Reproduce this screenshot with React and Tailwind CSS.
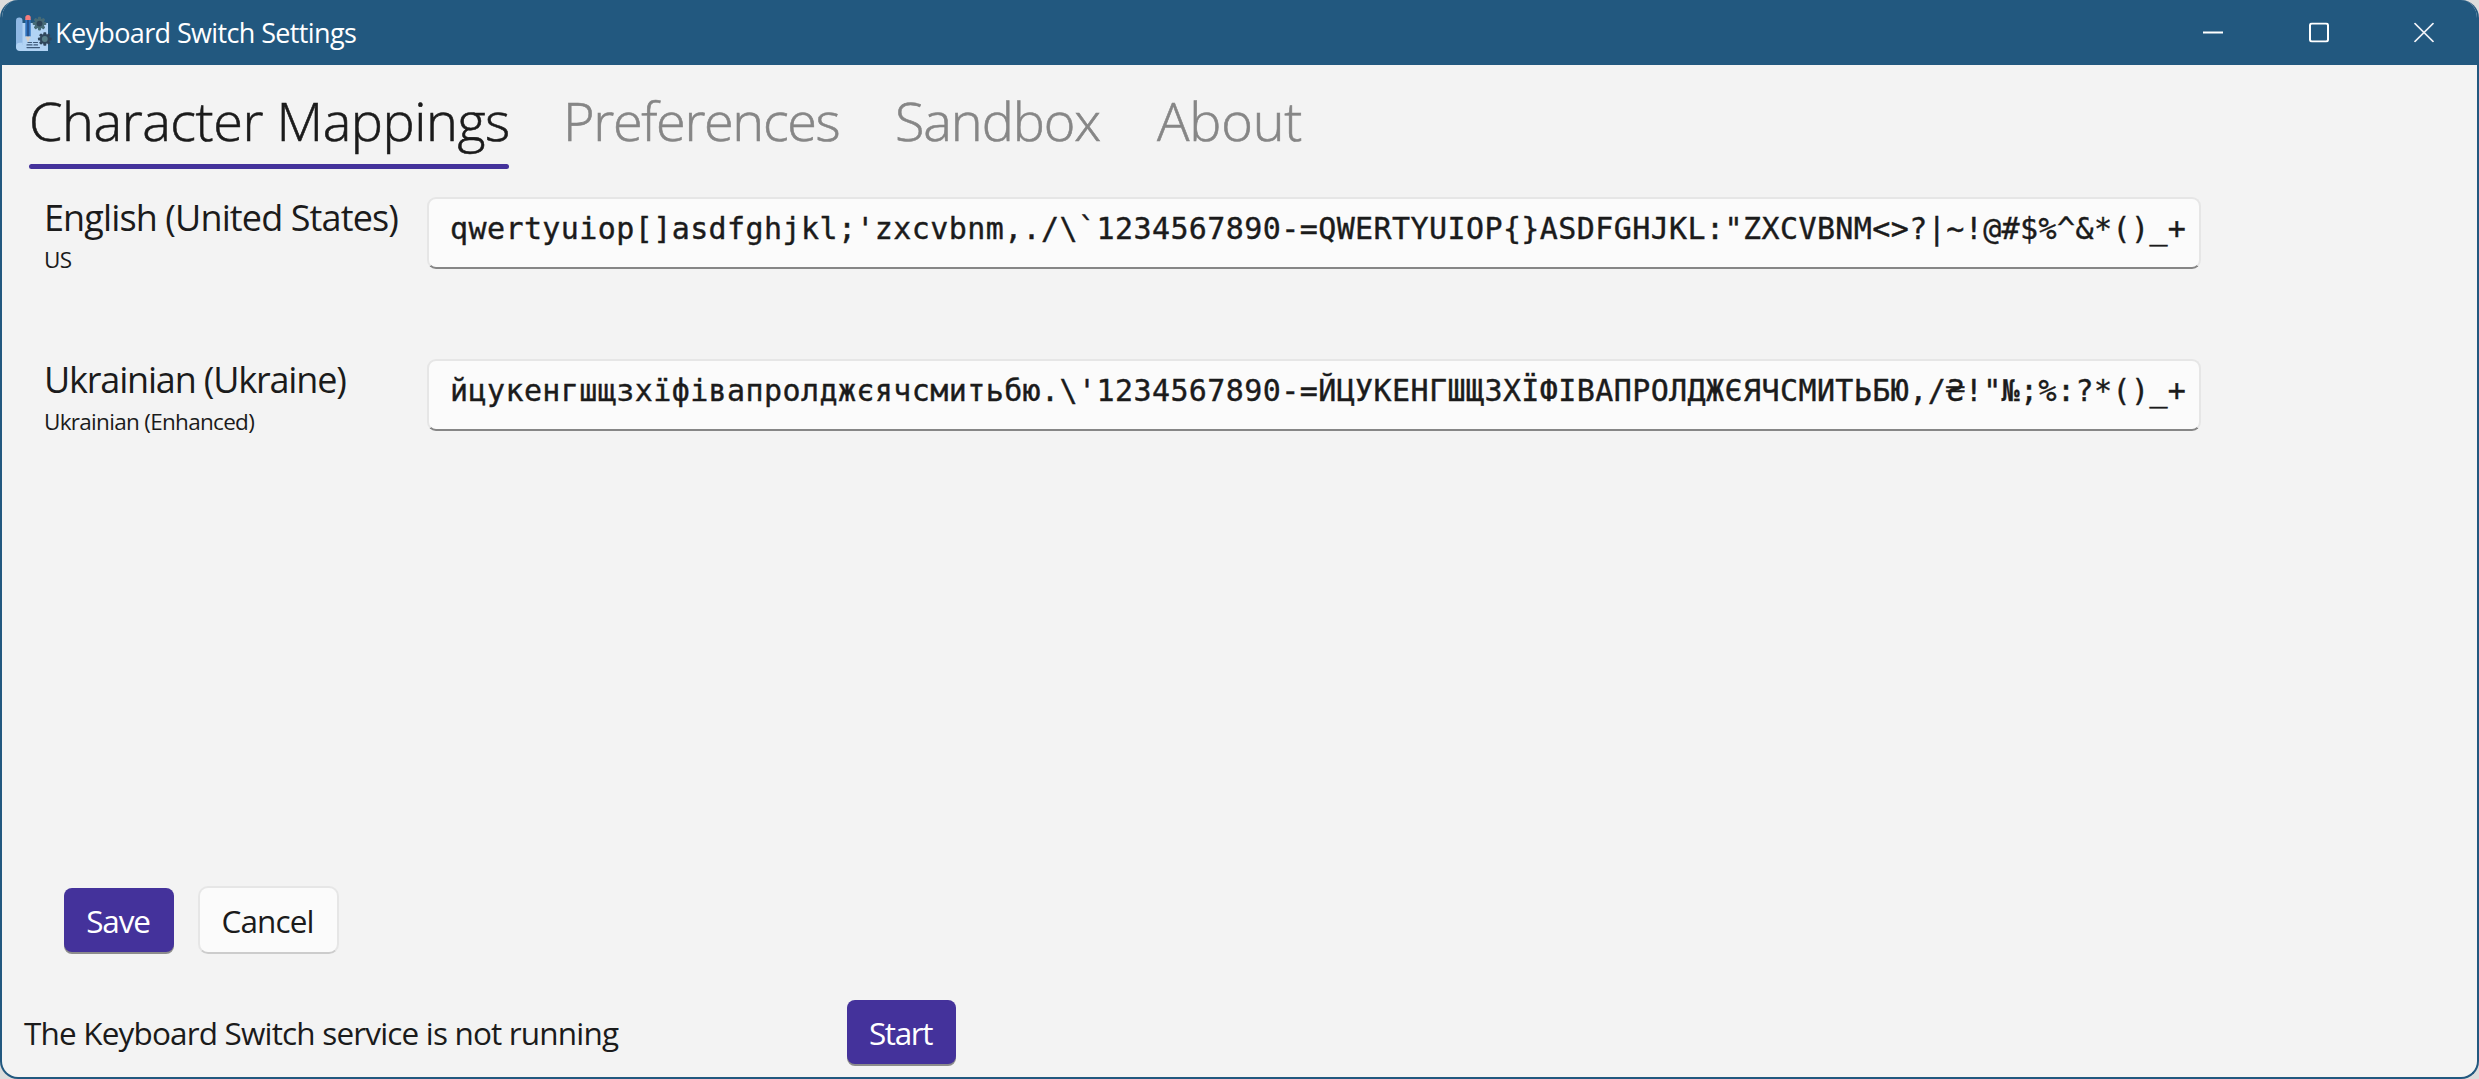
const tabs = [
  { label: "Character Mappings", active: true, box: "w-[480px]", text: "tracking-[-0.45px]" },
  { label: "Preferences", box: "w-[278px]", text: "tracking-[-1.35px]" },
  { label: "Sandbox", box: "w-[207px]", text: "tracking-[-1.1px]" },
  { label: "About", box: "w-[150px] pl-px", text: "tracking-[-0.2px]" },
];

const layouts = [
  {
    language: "English (United States)",
    languageTracking: "tracking-[-0.88px]",
    layout: "US",
    characters:
      "qwertyuiop[]asdfghjkl;'zxcvbnm,./\\`1234567890-=QWERTYUIOP{}ASDFGHJKL:\"ZXCVBNM<>?|~!@#$%^&*()_+",
  },
  {
    language: "Ukrainian (Ukraine)",
    languageTracking: "tracking-[-1.18px]",
    layout: "Ukrainian (Enhanced)",
    characters:
      "йцукенгшщзхїфівапролджєячсмитьбю.\\'1234567890-=ЙЦУКЕНГШЩЗХЇФІВАПРОЛДЖЄЯЧСМИТЬБЮ,/₴!\"№;%:?*()_+",
  },
];

function Gear({ cx, cy, fill, hub }) {
  return (
    <g transform={`translate(${cx} ${cy})`}>
      {[0, 45, 90, 135].map((a) => (
        <rect key={a} x="-1.5" y="-6.8" width="3" height="13.6" rx="0.8" fill={fill} transform={`rotate(${a})`} />
      ))}
      <circle r="5" fill={fill} />
      <circle r="2.9" fill={hub} />
    </g>
  );
}

function AppIcon() {
  return (
    <svg className="h-9 w-9 shrink-0 overflow-visible" viewBox="0 0 36 36">
      <path d="M5 8H32V36H5Z" fill="#b1d3f4" />
      <rect x="0" y="2.500" width="6.500" height="32" rx="3.200" fill="#8fb8e4" />
      <path d="M0 31.500a3.800 3.800 0 0 1 3.800-3.800H6.500V30H32V33.500A2.500 2.500 0 0 1 29.500 36H4A4 4 0 0 1 0 32Z" fill="#b1d3f4" />
      <rect x="9.300" y="4" width="5.400" height="17.500" fill="#2f72bd" />
      <rect x="11" y="5" width="2" height="16.500" fill="#25548f" />
      <path d="M9.300 5V2.600a2.700 2.700 0 0 1 5.400 0V5Z" fill="#f47c7c" />
      <path d="M9.300 21.500h5.400L12 27.500Z" fill="#d9cfc6" />
      <Gear cx={23.5} cy={8.600} fill="#476b76" hub="#2d4458" />
      <Gear cx={28.800} cy={24} fill="#30475c" hub="#587f88" />
      <path d="M12 27.500h3.500M17.500 27.500h4M11 29.900h5M18 29.900h3.500M11 32.600h12.500" stroke="#3d5878" strokeWidth="1.200" strokeLinecap="round" />
    </svg>
  );
}

function TitleBar() {
  return (
    <header className="flex h-[65px] shrink-0 items-center bg-[#22587f] pr-[43px] pl-3.5">
      <AppIcon />
      <h1 className="ml-[3px] flex-1 pt-px text-[27px] leading-[36px] tracking-[-0.63px] text-white">
        Keyboard Switch Settings
      </h1>
      <div className="flex w-[231px] -translate-y-[0.5px] justify-between">
        <svg className="h-5 w-5" viewBox="0 0 20 20">
          <path d="M0 10H20" stroke="#fff" strokeWidth="2" />
        </svg>
        <svg className="h-5 w-5" viewBox="0 0 20 20">
          <rect x="1" y="1" width="18" height="18" rx="2" fill="none" stroke="#fff" strokeWidth="2" />
        </svg>
        <svg className="h-5 w-5" viewBox="0 0 20 20">
          <path d="M0.5 0.5L19.5 19.5M19.5 0.5L0.5 19.5" stroke="#eef0f6" strokeWidth="1.7" />
        </svg>
      </div>
    </header>
  );
}

function Tab({ label, active, box, text }) {
  return (
    <div className={box}>
      <div
        className={`${text} text-[54px] leading-[72px] font-light whitespace-nowrap [-webkit-text-stroke:0.6px_currentColor] ${active ? "text-[#1b1b1b]" : "text-[#868686]"}`}
      >
        {label}
      </div>
      {active && <div className="mt-2 h-[5px] rounded-full bg-[#44329b]" />}
    </div>
  );
}

function LayoutRow({ language, languageTracking, layout, characters }) {
  return (
    <div className="flex h-[162px] items-start">
      <div className="w-[383px] shrink-0 pt-px whitespace-nowrap">
        <div className={`${languageTracking} text-[36px] leading-[48px]`}>{language}</div>
        <div className="mt-[3px] text-[22.5px] leading-[30px] tracking-[-0.7px]">{layout}</div>
      </div>
      <div className="mt-1 flex h-[72px] w-[1774px] items-center rounded-[9px] border-2 border-[#e6e6e6] border-b-[#868686] bg-[#fbfbfb] pb-[9px] pl-[21px]">
        <span className="font-['DejaVu_Sans_Mono',monospace] text-[30px] leading-[40px] tracking-[0.41px] whitespace-pre [-webkit-text-stroke:0.4px_currentColor]">
          {characters}
        </span>
      </div>
    </div>
  );
}

export default function App() {
  return (
    <div className="h-[1079px] w-[2479px] bg-[#dcdcdc]">
      <div className="flex h-full flex-col overflow-hidden rounded-[18px] border-2 border-t-0 border-[#22587f] bg-[#f3f3f3] font-['Open_Sans',sans-serif] text-[#1b1b1b]">
        <TitleBar />
        <nav className="mt-[19px] ml-[27px] flex h-[85px] shrink-0 gap-[54px]">
          {tabs.map((t) => (
            <Tab key={t.label} {...t} />
          ))}
        </nav>
        <main className="mt-6 flex-1 pl-[42px]">
          {layouts.map((l) => (
            <LayoutRow key={l.language} {...l} />
          ))}
        </main>
        <div className="flex h-[68px] shrink-0 items-center gap-6 pl-[62px] text-[31.5px]">
          <button className="h-16 w-[110px] rounded-lg bg-[#44329b] pt-[2px] pr-0.5 tracking-[-1.15px] text-white shadow-[0_2px_0_#8c8c8c]">
            Save
          </button>
          <button className="h-[68px] w-[141px] rounded-[10px] border-2 border-[#e6e6e6] border-b-[#cccccc] bg-[#fbfbfb] pt-[2px] pr-0.5 tracking-[-0.9px]">
            Cancel
          </button>
        </div>
        <footer className="mt-[46px] mb-[13px] flex h-16 shrink-0 items-center pl-[22px] text-[31.5px]">
          <div className="w-[823px] pt-[2px] tracking-[-0.83px]">The Keyboard Switch service is not running</div>
          <button className="h-16 w-[109px] rounded-lg bg-[#44329b] pt-[2px] pr-0.5 tracking-[-1.4px] text-white shadow-[0_2px_0_#8c8c8c]">
            Start
          </button>
        </footer>
      </div>
    </div>
  );
}
